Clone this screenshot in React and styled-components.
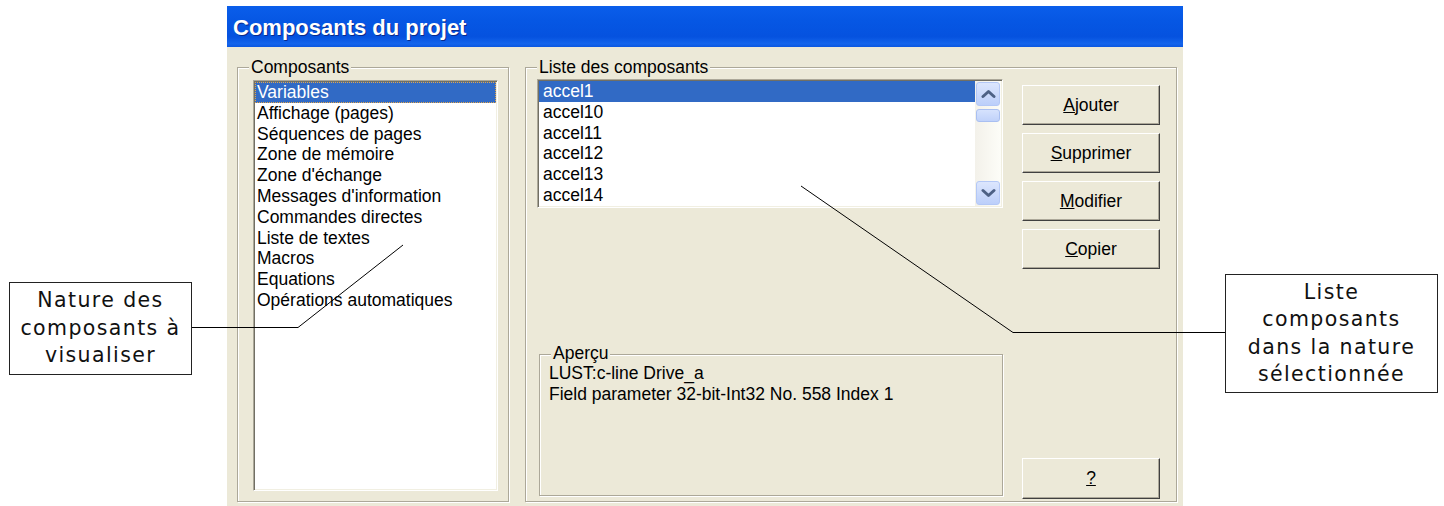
import React from "react";
import styled, { createGlobalStyle } from "styled-components";

const GlobalStyle = createGlobalStyle`
  html, body {
    margin: 0;
    padding: 0;
    background: #fff;
  }
  body {
    overflow: hidden;
  }
`;

const Page = styled.div`
  position: relative;
  display: grid;
  grid-template-columns: 227px 956px 1fr;
  align-items: start;
  width: 1444px;
  height: 506px;
  overflow: hidden;
  font-family: "Liberation Sans", Arial, sans-serif;
`;

// annotation boxes on both sides of the dialog
const Callout = styled.div`
  box-sizing: border-box;
  display: flex;
  flex-direction: column;
  justify-content: center;
  width: ${(p) => p.$w}px;
  height: ${(p) => p.$h}px;
  margin: ${(p) => p.$top}px 0 0 ${(p) => p.$left}px;
  border: 1px solid #222;
  background: #fff;
  color: #111;
  font-family: "DejaVu Sans", Verdana, sans-serif;
  font-size: 20.5px;
  letter-spacing: 1.4px;
  line-height: 27.5px;
  text-align: center;
  white-space: nowrap;
`;

const Leaders = styled.svg`
  position: absolute;
  left: 0;
  top: 0;
  pointer-events: none;
`;

const Window = styled.section`
  display: flex;
  flex-direction: column;
  margin-top: 6px;
  height: 500px;
  background: #ece9d8;
`;

const TitleBar = styled.header`
  box-sizing: border-box;
  height: 41px;
  padding: 9px 0 0 6px;
  background: linear-gradient(
    to bottom,
    #0a5eea 0%,
    #0657e4 35%,
    #0552df 75%,
    #1465ec 92%,
    #0b57e0 100%
  );
  color: #fff;
  font-size: 22px;
  font-weight: bold;
  line-height: 25px;
  text-shadow: 1px 1px 0 #0a2a8c;
`;

const Client = styled.div`
  flex: 1;
  display: flex;
  gap: 16px;
  padding: 20px 6px 4px 10px;
  font-size: 17.5px;
  color: #000;
`;

const Group = styled.div`
  position: relative;
  box-sizing: border-box;
  border: 1px solid #aca899;
  box-shadow: inset 1px 1px 0 #fff, 1px 1px 0 #fff;
  ${(p) => p.$width && `width: ${p.$width}px;`}
  ${(p) => p.$grow && "flex: 1;"}
  padding: ${(p) => p.$pad};
`;

const Caption = styled.span`
  position: absolute;
  top: ${(p) => p.$top || -11}px;
  left: 11px;
  padding: 0 2px;
  background: #ece9d8;
  line-height: 20px;
  white-space: nowrap;
`;

const ListBox = styled.div`
  box-sizing: border-box;
  display: flex;
  width: ${(p) => p.$w}px;
  height: ${(p) => p.$h}px;
  padding: 1px;
  border: 1px solid;
  border-color: #aca899 #fff #fff #aca899;
  box-shadow: inset 1px 1px 0 #716f64, inset -1px -1px 0 #f1efe2;
  background: #fff;
  overflow: hidden;
`;

const Rows = styled.ul`
  flex: 1;
  margin: 0;
  padding: 0;
  list-style: none;
  overflow: hidden;
`;

const Row = styled.li`
  box-sizing: border-box;
  height: ${(p) => p.$h}px;
  line-height: ${(p) => p.$h}px;
  padding-left: ${(p) => p.$indent}px;
  white-space: nowrap;
  ${(p) =>
    p.$selected &&
    `
    background: #316ac5;
    color: #fff;
  `}
  ${(p) =>
    p.$focus &&
    `
    outline: 1px dotted #e2a64a;
    outline-offset: -1px;
  `}
`;

const ScrollBar = styled.div`
  display: flex;
  flex-direction: column;
  width: 26px;
  background: linear-gradient(to right, #f3f1ea, #fdfdf8);
`;

const ScrollButton = styled.div`
  display: flex;
  align-items: center;
  justify-content: center;
  box-sizing: border-box;
  height: 24px;
  margin: 1px;
  border: 1px solid #b4c8f6;
  border-radius: 3px;
  background: linear-gradient(to bottom, #dce6fd, #bccffa);
`;

const Thumb = styled.div`
  box-sizing: border-box;
  height: 13px;
  margin: 2px 1px 0;
  border: 1px solid #a9bff1;
  border-radius: 3px;
  background: linear-gradient(to bottom, #d6e2fd, #c0d2fa);
`;

const Track = styled.div`
  flex: 1;
`;

const RightBody = styled.div`
  display: grid;
  grid-template-columns: 466px 138px;
  column-gap: 19px;
  height: 100%;
`;

const MainColumn = styled.div`
  display: flex;
  flex-direction: column;
`;

const Preview = styled(Group)`
  margin: auto 0 3px 2px;
  height: 142px;
`;

const ButtonColumn = styled.div`
  display: flex;
  flex-direction: column;
  gap: 8px;
  padding-top: 6px;
`;

const PushButton = styled.button`
  box-sizing: border-box;
  height: ${(p) => p.$h || 40}px;
  ${(p) => p.$bottom && "margin-top: auto;"}
  padding: 0;
  border: 1px solid;
  border-color: #fff #404040 #404040 #fff;
  box-shadow: inset -1px -1px 0 #aca899;
  background: #ece9d8;
  color: #000;
  font-family: "Liberation Sans", Arial, sans-serif;
  font-size: 17.5px;
  cursor: default;
`;

const PreviewText = styled.div`
  line-height: 20.5px;
  white-space: nowrap;
`;

const Chevron = ({ down }) => (
  <svg width="15" height="10" viewBox="0 0 15 10">
    <path
      d={down ? "M2 2.5 L7.5 7.5 L13 2.5" : "M2 7.5 L7.5 2.5 L13 7.5"}
      fill="none"
      stroke="#4d6185"
      strokeWidth="3"
      strokeLinecap="round"
      strokeLinejoin="round"
    />
  </svg>
);

const natures = [
  "Variables",
  "Affichage (pages)",
  "Séquences de pages",
  "Zone de mémoire",
  "Zone d'échange",
  "Messages d'information",
  "Commandes directes",
  "Liste de textes",
  "Macros",
  "Equations",
  "Opérations automatiques",
];

const components = ["accel1", "accel10", "accel11", "accel12", "accel13", "accel14"];

const buttons = [
  { key: "A", rest: "jouter" },
  { key: "S", rest: "upprimer" },
  { key: "M", rest: "odifier" },
  { key: "C", rest: "opier" },
];

export default function App() {
  return (
    <>
      <GlobalStyle />
      <Page>
        <Callout $w={183} $h={93} $top={282} $left={9}>
          <span>Nature des</span>
          <span>composants à</span>
          <span>visualiser</span>
        </Callout>

        <Window>
          <TitleBar>Composants du projet</TitleBar>
          <Client>
            <Group $width={272} $pad="12px 10px 10px 15px">
              <Caption>Composants</Caption>
              <ListBox $w={245} $h={411}>
                <Rows>
                  {natures.map((n, i) => (
                    <Row key={n} $h={20.8} $indent={2} $selected={i === 0} $focus={i === 0}>
                      {n}
                    </Row>
                  ))}
                </Rows>
              </ListBox>
            </Group>

            <Group $grow $pad="11px 16px 2px 11px">
              <Caption>Liste des composants</Caption>
              <RightBody>
                <MainColumn>
                  <ListBox $w={466} $h={129}>
                    <Rows>
                      {components.map((c, i) => (
                        <Row key={c} $h={20.8} $indent={4} $selected={i === 0}>
                          {c}
                        </Row>
                      ))}
                    </Rows>
                    <ScrollBar>
                      <ScrollButton>
                        <Chevron />
                      </ScrollButton>
                      <Thumb />
                      <Track />
                      <ScrollButton>
                        <Chevron down />
                      </ScrollButton>
                    </ScrollBar>
                  </ListBox>

                  <Preview $pad="8px 10px 0 9px">
                    <Caption $top={-12}>Aperçu</Caption>
                    <PreviewText>LUST:c-line Drive_a</PreviewText>
                    <PreviewText>Field parameter 32-bit-Int32 No. 558 Index 1</PreviewText>
                  </Preview>
                </MainColumn>

                <ButtonColumn>
                  {buttons.map((b) => (
                    <PushButton key={b.key}>
                      <u>{b.key}</u>
                      {b.rest}
                    </PushButton>
                  ))}
                  <PushButton $bottom $h={41}>
                    <u>?</u>
                  </PushButton>
                </ButtonColumn>
              </RightBody>
            </Group>
          </Client>
        </Window>

        <Callout $w={213} $h={119} $top={274} $left={42}>
          <span>Liste</span>
          <span>composants</span>
          <span>dans la nature</span>
          <span>sélectionnée</span>
        </Callout>

        <Leaders width="1444" height="506">
          <polyline points="192,327.5 298,327.5 403,245" fill="none" stroke="#000" strokeWidth="1" />
          <polyline points="1225,332.5 1013,332.5 801,186" fill="none" stroke="#000" strokeWidth="1" />
        </Leaders>
      </Page>
    </>
  );
}
